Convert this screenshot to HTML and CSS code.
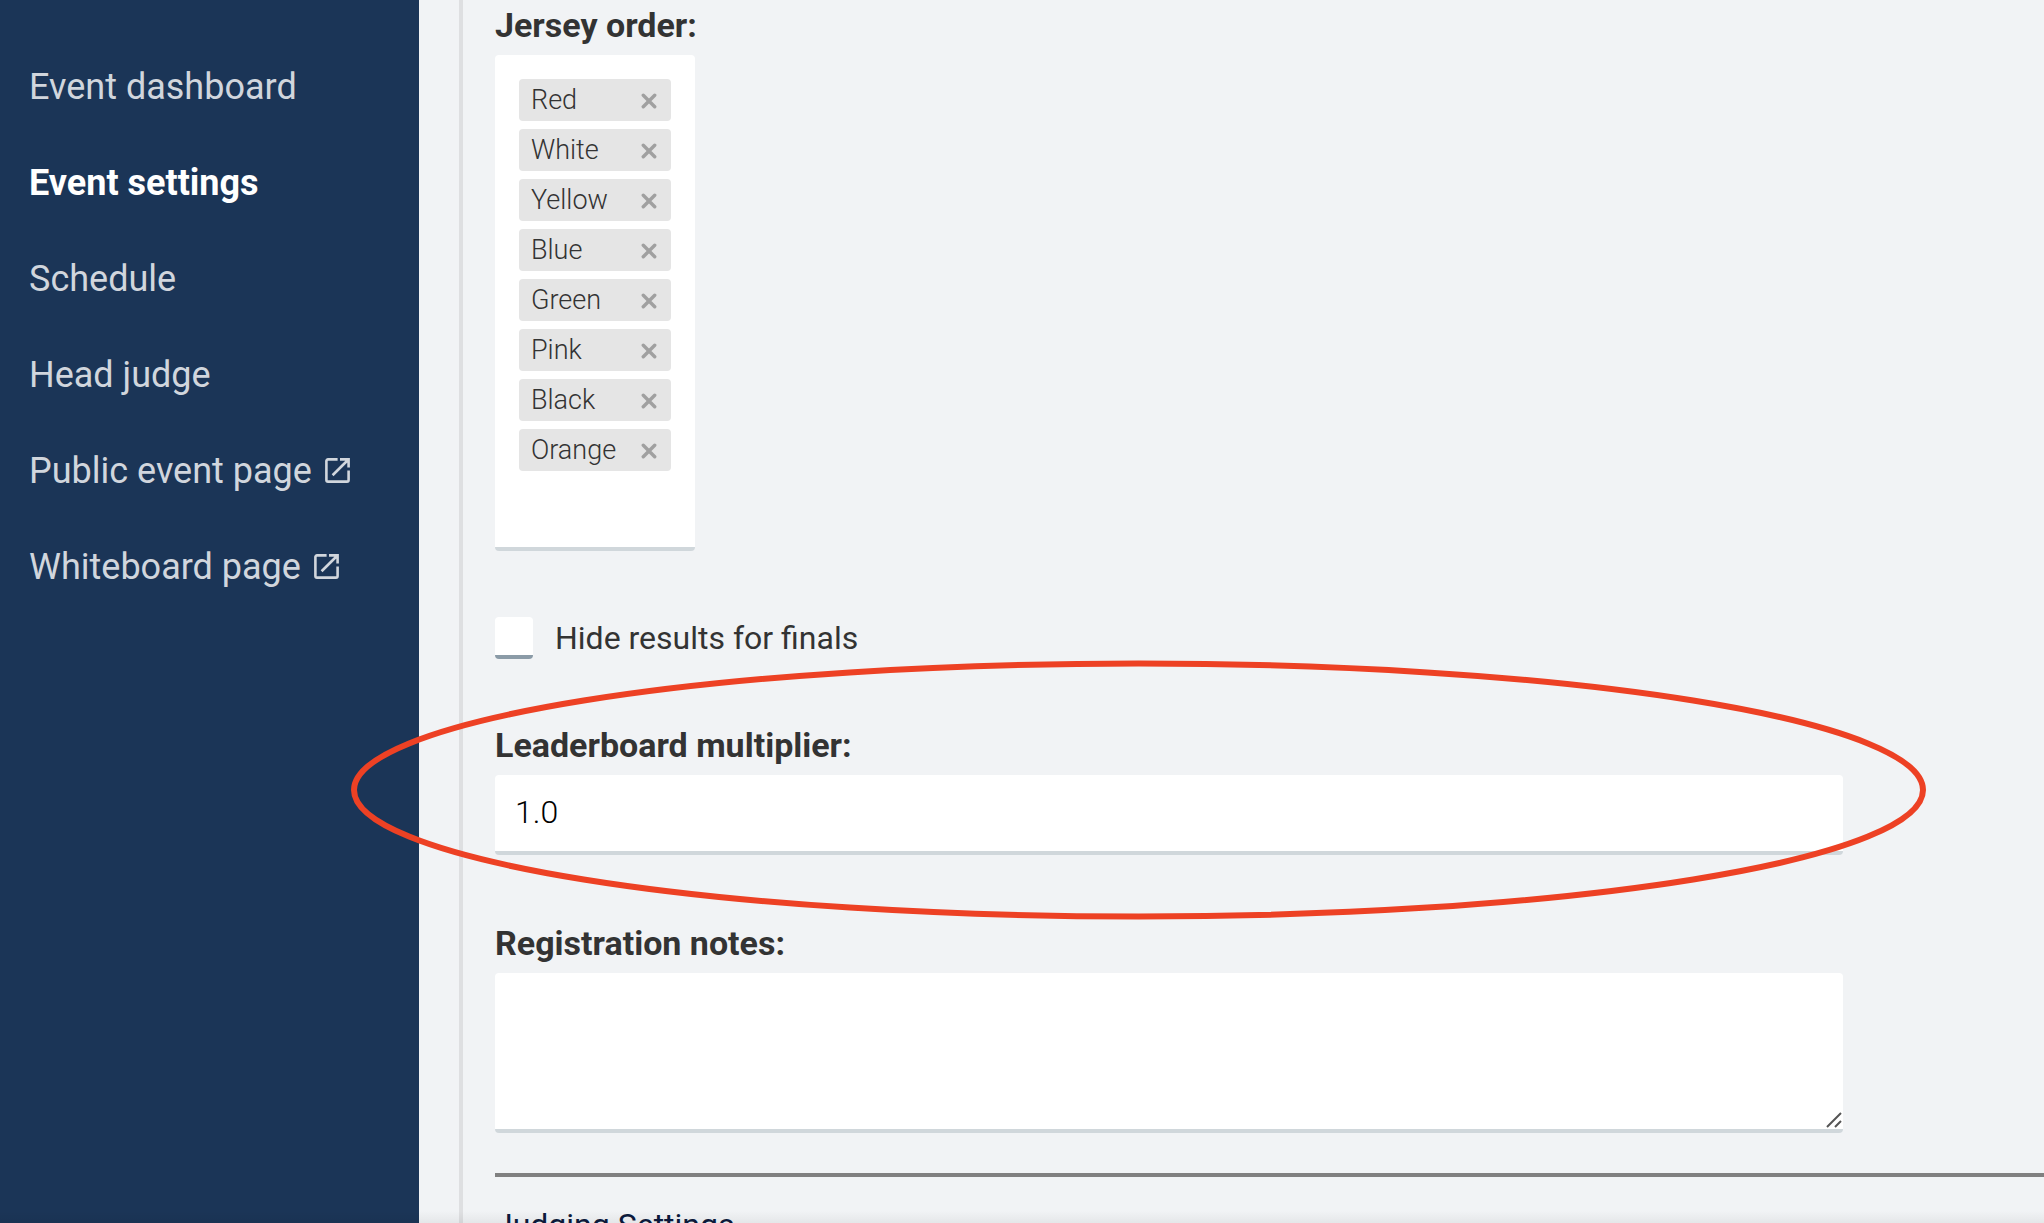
FILE: index.html
```html
<!DOCTYPE html>
<html lang="en">

<head>
    <meta charset="UTF-8">
    <meta name="viewport" content="width=device-width, initial-scale=1.0">
    <title>Event settings</title>
    <link rel="stylesheet" href="styles.css">
</head>

<body>
    <svg class="sprite" aria-hidden="true">
        <symbol id="icon-external" viewBox="0 0 25 25">
            <path d="M12.6 1.4H3A1.6 1.6 0 0 0 1.4 3V22A1.6 1.6 0 0 0 3 23.6H22A1.6 1.6 0 0 0 23.6 22V12.4M15 1.4H23.6V9.4M23.2 1.8L7.6 17.2" />
        </symbol>
        <symbol id="icon-remove" viewBox="0 0 14 14">
            <path d="M2 2L12 12M12 2L2 12" />
        </symbol>
    </svg>

    <div class="layout">
        <!-- Sidebar -->
        <nav class="sidebar">
            <a class="nav-link" href="#">Event dashboard</a>
            <a class="nav-link active" href="#">Event settings</a>
            <a class="nav-link" href="#">Schedule</a>
            <a class="nav-link" href="#">Head judge</a>
            <a class="nav-link" href="#">Public event page
                <svg class="external"><use href="#icon-external" /></svg>
            </a>
            <a class="nav-link" href="#">Whiteboard page
                <svg class="external"><use href="#icon-external" /></svg>
            </a>
        </nav>

        <!-- Settings form -->
        <main class="content">
            <form class="settings">
                <div class="field">
                    <h2 class="label" id="jerseyOrder">Jersey order:</h2>
                    <ul class="tags" aria-labelledby="jerseyOrder">
                        <li class="tag">Red <button class="remove" type="button" aria-label="Remove Red"><svg><use href="#icon-remove" /></svg></button></li>
                        <li class="tag">White <button class="remove" type="button" aria-label="Remove White"><svg><use href="#icon-remove" /></svg></button></li>
                        <li class="tag">Yellow <button class="remove" type="button" aria-label="Remove Yellow"><svg><use href="#icon-remove" /></svg></button></li>
                        <li class="tag">Blue <button class="remove" type="button" aria-label="Remove Blue"><svg><use href="#icon-remove" /></svg></button></li>
                        <li class="tag">Green <button class="remove" type="button" aria-label="Remove Green"><svg><use href="#icon-remove" /></svg></button></li>
                        <li class="tag">Pink <button class="remove" type="button" aria-label="Remove Pink"><svg><use href="#icon-remove" /></svg></button></li>
                        <li class="tag">Black <button class="remove" type="button" aria-label="Remove Black"><svg><use href="#icon-remove" /></svg></button></li>
                        <li class="tag">Orange <button class="remove" type="button" aria-label="Remove Orange"><svg><use href="#icon-remove" /></svg></button></li>
                    </ul>
                </div>

                <div class="check-row">
                    <input class="checkbox" type="checkbox" id="hideResults">
                    <label for="hideResults">Hide results for finals</label>
                </div>

                <div class="field">
                    <label class="label" for="multiplier">Leaderboard multiplier:</label>
                    <input class="control" type="text" id="multiplier" value="1.0">
                </div>

                <div class="field">
                    <label class="label" for="notes">Registration notes:</label>
                    <div class="notes-wrap">
                        <textarea class="control notes" id="notes"></textarea>
                        <svg class="grip" viewBox="0 0 16 16"><path d="M1 15L15 1M9 15L15 9" /></svg>
                    </div>
                </div>

                <hr class="divider">
                <h3 class="section-title">Judging Settings</h3>
            </form>
        </main>

        <!-- Highlight around the multiplier field -->
        <svg class="highlight" viewBox="0 0 1575 260" aria-hidden="true">
            <ellipse cx="787.5" cy="130" rx="784.5" ry="126.5" />
        </svg>
        <div class="bottom-shade"></div>
    </div>
</body>

</html>
```
FILE: styles.css
```css
* {
    box-sizing: border-box;
}

body {
    margin: 0;
    background-color: #f1f3f5;
    color: #333;
    font-family: Roboto, sans-serif;
    font-size: 32px;
    line-height: 40px;
}

.sprite {
    display: none;
}

.layout {
    position: relative;
    display: flex;
    height: 100vh;
    overflow: hidden;
}

/* Sidebar */
.sidebar {
    flex: none;
    width: 419px;
    padding: 39px 29px;
    background-color: #1b3557;
}

.nav-link {
    display: block;
    color: #d1d6dd;
    font-size: 36px;
    line-height: 96px;
    text-decoration: none;
}

.nav-link.active {
    color: #fff;
    font-weight: bold;
}

.external {
    width: 25px;
    height: 25px;
    margin-left: 4px;
    fill: none;
    stroke: currentColor;
    stroke-width: 2.6;
}

/* Content */
.content {
    flex: 1;
    margin-left: 40px;
    padding-left: 32px;
    border-left: 4px solid #dedfe1;
}

.settings {
    display: flex;
    flex-direction: column;
}

.field {
    width: 87%;
}

.label {
    display: block;
    margin: 0;
    padding: 5px 0 10px;
    font-size: 34px;
    font-weight: bold;
}

.tags {
    width: 200px;
    height: 496px;
    margin: 0 0 66px;
    padding: 24px;
    border-bottom: 4px solid #d0d7db;
    border-radius: 4px;
    background-color: #fff;
    list-style: none;
}

.tag {
    display: flex;
    align-items: center;
    justify-content: space-between;
    height: 42px;
    margin-bottom: 8px;
    padding: 0 14px 0 12px;
    border-radius: 4px;
    background-color: #e5e5e5;
    font-size: 27px;
    font-weight: 300;
}

.remove {
    display: flex;
    padding: 2px 0 0;
    border: 0;
    background: none;
    cursor: pointer;
}

.remove svg {
    width: 16px;
    height: 16px;
    fill: none;
    stroke: #a0a0a0;
    stroke-linecap: round;
    stroke-width: 3;
}

.check-row {
    display: flex;
    align-items: center;
    gap: 22px;
    margin-bottom: 61px;
}

.checkbox {
    width: 38px;
    height: 42px;
    margin: 0;
    border-bottom: 4px solid #8b9ba7;
    border-radius: 4px;
    background-color: #fff;
    appearance: none;
}

.control {
    display: block;
    width: 100%;
    height: 80px;
    margin-bottom: 63px;
    padding: 0 20px 2px;
    border: 0;
    border-bottom: 4px solid #d0d7db;
    border-radius: 4px;
    background-color: #fff;
    color: #000;
    font: 300 32px Roboto, sans-serif;
}

.notes-wrap {
    position: relative;
}

.notes {
    height: 160px;
    margin-bottom: 40px;
    padding: 20px;
    resize: none;
}

.grip {
    position: absolute;
    right: 1px;
    bottom: 5px;
    width: 16px;
    height: 16px;
    stroke: #555;
    stroke-width: 2;
}

.divider {
    width: 100%;
    height: 4px;
    margin: 0 0 28px;
    border: 0;
    background-color: #808080;
}

.section-title {
    margin: 0;
    color: #0c1a3d;
    font-size: 32px;
    font-weight: 400;
    white-space: nowrap;
}

/* Overlays */
.highlight {
    position: absolute;
    top: 660px;
    left: 351px;
    width: 1575px;
    height: 260px;
    fill: none;
    stroke: #ed4124;
    stroke-width: 6;
    pointer-events: none;
}

.bottom-shade {
    position: absolute;
    right: 0;
    bottom: 0;
    left: 0;
    height: 12px;
    background: linear-gradient(rgba(0, 0, 0, 0), rgba(0, 0, 0, 0.05));
    pointer-events: none;
}
```
